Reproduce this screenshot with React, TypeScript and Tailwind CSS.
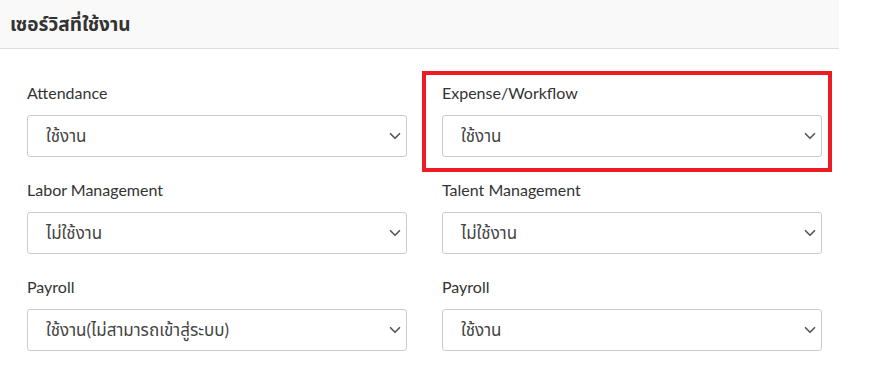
import { ChevronDown } from "lucide-react";

const fields = [
    { label: "Attendance", value: "ใช้งาน" },
    { label: "Expense/Workflow", value: "ใช้งาน", highlight: true },
    { label: "Labor Management", value: "ไม่ใช้งาน" },
    { label: "Talent Management", value: "ไม่ใช้งาน" },
    { label: "Payroll", value: "ใช้งาน(ไม่สามารถเข้าสู่ระบบ)" },
    { label: "Payroll", value: "ใช้งาน" },
];

const font = { fontFamily: '"Lato", "Noto Sans", "Noto Sans Thai", sans-serif' };

export default function App() {
    return (
        <div className="w-[875px] h-[366px] bg-white" style={font}>
            <div className="w-[839px]">
                <div className="h-[49px] bg-[#f9f9f9] border-b border-[#dddddd] flex items-center px-[10px]">
                    <span className="text-[19px] font-bold text-[#333333]">เซอร์วิสที่ใช้งาน</span>
                </div>
                <div className="grid grid-cols-2 gap-x-[35px] gap-y-[23px] pl-[27px] pr-[17px] pt-[34px]">
                    {fields.map((f, i) => (
                        <div key={i} className="relative">
                            {f.highlight && <div className="absolute left-[-20px] right-[-10px] top-[-12px] bottom-[-15px] border-[4px] border-[#ed1c24] pointer-events-none" />}
                            <div className="text-[16px] leading-[20px] text-[#333333] mb-[12px]">{f.label}</div>
                            <div className="h-[42px] border border-[#cccccc] rounded-[3px] flex items-center justify-between pl-[18px] pr-[2px] bg-white">
                                <span className="text-[17px] text-[#444444]">{f.value}</span>
                                <ChevronDown size={18} strokeWidth={2.2} className="text-[#555555]" />
                            </div>
                        </div>
                    ))}
                </div>
            </div>
        </div>
    );
}
